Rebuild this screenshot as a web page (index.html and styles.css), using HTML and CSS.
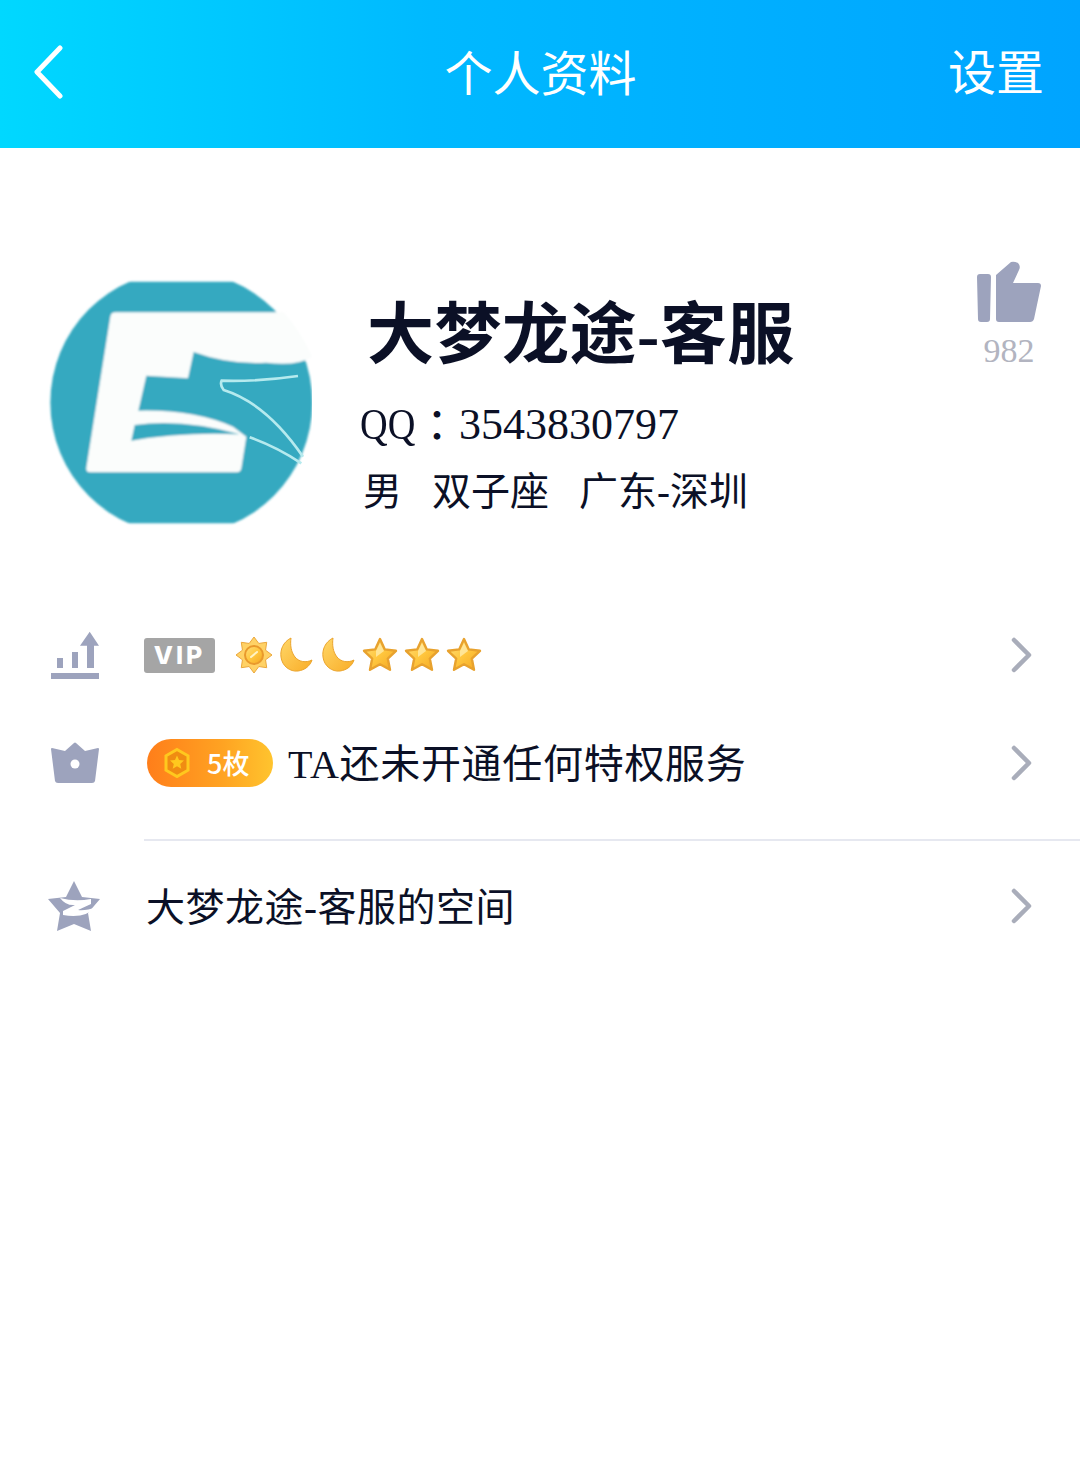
FILE: index.html
```html
<!DOCTYPE html>
<html lang="zh-CN">
<head>
<meta charset="utf-8">
<title>个人资料</title>
<link rel="stylesheet" href="styles.css">
</head>
<body>
<svg class="defs" width="0" height="0" aria-hidden="true">
  <defs>
    <linearGradient id="gold" x1="0" y1="0" x2="1" y2="1">
      <stop offset="0" stop-color="#ffdf7e"/>
      <stop offset=".5" stop-color="#ffc73f"/>
      <stop offset="1" stop-color="#f4a620"/>
    </linearGradient>
    <linearGradient id="moongold" x1="0" y1="0" x2="1" y2="1">
      <stop offset="0" stop-color="#ffd768"/>
      <stop offset="1" stop-color="#f9ad28"/>
    </linearGradient>
    <filter id="soft"><feGaussianBlur stdDeviation="2.500"/></filter>
    <clipPath id="disc"><rect x="0" y="95" width="900" height="725"/></clipPath>
    <symbol id="star" viewBox="0 0 38 38">
      <path d="M19 3l4.800 10.400 11.200 1.400-8.200 7.800 2.200 11.200L19 28.300 9 33.800l2.200-11.200L3 14.800l11.200-1.400z" fill="url(#gold)" stroke="#e8a22e" stroke-width="2.400" stroke-linejoin="round"/>
      <path d="M15 15l4-8 4 8-8 6z" fill="#ffeeb0" opacity=".75"/>
    </symbol>
    <symbol id="moon" viewBox="0 0 38 38">
      <path transform="translate(2 0)" d="M12 2C4 6 1 14 2 21c1 9 9 15 17 14 7-1 12-5 14-11-6 3-13 2-17-3C12 16 11 9 12 2z" fill="url(#moongold)" stroke="#eba42c" stroke-width="1" stroke-linejoin="round"/>
    </symbol>
    <symbol id="sun" viewBox="0 0 38 38">
      <path d="M19 1L23.800 7.450 31.700 6.300 30.550 14.200 37 19 30.550 23.800 31.700 31.700 23.800 30.550 19 37 14.200 30.550 6.300 31.700 7.450 23.800 1 19 7.450 14.200 6.300 6.300 14.200 7.450z" fill="#ffd266" stroke="#eba73c" stroke-width="1" stroke-linejoin="round"/>
      <circle cx="19" cy="19" r="9" fill="url(#gold)" stroke="#e9992c" stroke-width="2"/>
      <path d="M16 21l6-5" stroke="#fff3c4" stroke-width="2" stroke-linecap="round"/>
    </symbol>
    <symbol id="chev" viewBox="0 0 22 36">
      <path d="M3 3l15 15L3 33" fill="none" stroke="#a9adba" stroke-width="4.500" stroke-linecap="round" stroke-linejoin="round"/>
    </symbol>
  </defs>
</svg>

<header class="topbar">
  <svg class="back" viewBox="0 0 30 54"><path d="M27 3L4 27l23 24" fill="none" stroke="#fff" stroke-width="5" stroke-linecap="round" stroke-linejoin="round"/></svg>
  <h1 class="title">个人资料</h1>
  <span class="settings">设置</span>
</header>

<section class="profile">
  <svg class="avatar" viewBox="45 84 792 750">
    <g filter="url(#soft)">
      <ellipse cx="445" cy="458" rx="393" ry="395" fill="#36a9c0" clip-path="url(#disc)"/>
      <path d="M247 187H752Q800 240 838 320Q790 350 700 338Q590 345 482 306L465 385L340 377L316 482Q480 478 600 530L640 560L625 655q-2 12-14 12H172q-14 0-12-14L232 200q2-13 15-13z" fill="#fbfdfc"/>
      <path d="M305 525Q450 505 620 553Q450 545 295 572z" fill="#36a9c0"/>
    </g>
    <path d="M795 378Q680 395 566 392Q560 405 572 420Q700 460 810 620" fill="none" stroke="#b5eaee" stroke-width="8"/>
    <path d="M650 562Q730 590 805 640" fill="none" stroke="#b5eaee" stroke-width="8"/>
  </svg>
  <div class="info">
    <div class="name">大梦龙途-客服</div>
    <div class="qq"><span class="qq-label">QQ</span><span class="qq-colon">：</span>3543830797</div>
    <div class="meta"><span>男</span><span>双子座</span><span>广东-深圳</span></div>
  </div>
  <div class="likes">
    <svg class="thumb" viewBox="0 0 64 62">
      <path d="M0 16a3 3 0 0 1 3-3h8a3 3 0 0 1 3 3l-1 42a3 3 0 0 1-3 3H4a3 3 0 0 1-3-3z" fill="#9da3bd"/>
      <path d="M19 14L34 1q3-1 7 1 3 3 1 7l-6 13H61q3 0 3 3L57 58q-1 3-4 3H22q-3 0-3-3z" fill="#9da3bd"/>
    </svg>
    <span class="like-count">982</span>
  </div>
</section>

<section class="rows">
  <div class="row">
    <svg class="row-icon chart-icon" viewBox="0 0 48 50">
      <path d="M0 43h48v6H0zM6 28h6v10H6zM21 22h6v16h-6zM36 15.700h7V38h-7zM38.700 1.700L48 15.700H29z" fill="#9da3bd"/>
    </svg>
    <span class="vip">VIP</span>
    <div class="levels">
      <svg class="lv"><use href="#sun"/></svg>
      <svg class="lv"><use href="#moon"/></svg>
      <svg class="lv"><use href="#moon"/></svg>
      <svg class="lv"><use href="#star"/></svg>
      <svg class="lv"><use href="#star"/></svg>
      <svg class="lv"><use href="#star"/></svg>
    </div>
    <svg class="chev"><use href="#chev"/></svg>
  </div>
  <div class="row">
    <svg class="row-icon" viewBox="0 0 48 48">
      <path d="M0 10q0-1 1-1l13 3 9-8q1-1 2 0l9 8 13-3q1 0 1 1l-4 32q-.5 2-3 2H7q-2.500 0-3-2z" fill="#9da3bd"/>
      <circle cx="24" cy="25" r="4.500" fill="#fff"/>
    </svg>
    <span class="pill">
      <svg class="hex" viewBox="0 0 30 34">
        <path d="M15 3.500l11 6.300v14.400l-11 6.300-11-6.300V9.800z" fill="#f08c12" stroke="#ffc81e" stroke-width="3"/>
        <path d="M15 9.500l2 4.600 5 .5-3.800 3.300 1.100 4.900-4.300-2.600-4.300 2.600 1.100-4.900L8 14.600l5-.5z" fill="#ffc81e"/>
      </svg>
      <span class="pill-text">5枚</span>
    </span>
    <span class="row-text">TA还未开通任何特权服务</span>
    <svg class="chev"><use href="#chev"/></svg>
  </div>
  <div class="divider"></div>
  <div class="row">
    <svg class="row-icon star-icon" viewBox="0 0 52 50">
      <path d="M26 0l8 16 18 2-12 14 3 18-17-7-17 7 3-18L0 18l18-2z" fill="#9da3bd"/>
      <path d="M12 17Q27 21 43 18L43 23L30 29Q38 30 48 26Q37 38 15 34L15 30L27 24Q18 25 12 17z" fill="#fff"/>
    </svg>
    <span class="row-text space-text">大梦龙途-客服的空间</span>
    <svg class="chev"><use href="#chev"/></svg>
  </div>
</section>
</body>
</html>
```

FILE: styles.css
```css
* { box-sizing: border-box; }

html, body {
  margin: 0;
  padding: 0;
  background: #fff;
}

body {
  width: 1080px;
  min-height: 1478px;
  font-family: "Liberation Serif", "Noto Sans CJK SC", serif;
  color: #0b1026;
}

.defs { position: absolute; }

.topbar {
  height: 148px;
  display: grid;
  grid-template-columns: 1fr auto 1fr;
  align-items: center;
  padding: 0 36px 4px 33px;
  background: linear-gradient(90deg, #00d8ff 0%, #00b9ff 40%, #00a4ff 100%);
  color: #fff;
}

.back { width: 30px; height: 54px; }

.title {
  margin: 0 0 0 4px;
  padding-top: 6px;
  font-size: 48px;
  font-weight: 400;
  line-height: 60px;
}

.settings {
  justify-self: end;
  padding-top: 4px;
  font-size: 48px;
  line-height: 60px;
}

.profile {
  display: flex;
  align-items: flex-start;
  padding: 113px 39px 0 48px;
}

.avatar {
  width: 264px;
  height: 250px;
  margin-top: 17px;
  flex: none;
}

.info {
  margin-left: 48px;
  padding-top: 34px;
  flex: 1;
}

.name {
  margin-left: 7px;
  font-size: 67px;
  font-weight: 700;
  letter-spacing: .5px;
  line-height: 80px;
  white-space: nowrap;
}

.qq {
  height: 56px;
  margin-top: 22px;
  font-size: 44px;
  line-height: 56px;
  white-space: nowrap;
}

.qq-label {
  display: inline-block;
  width: 55px;
  transform: scaleX(.87);
  transform-origin: left center;
}

.qq-colon {
  font-family: "Noto Sans CJK TC", serif;
  line-height: 1;
  vertical-align: -3px;
}

.meta {
  display: flex;
  gap: 30px;
  margin-top: 14px;
  margin-left: 3px;
  font-size: 39px;
  line-height: 50px;
  white-space: nowrap;
}

.likes {
  display: flex;
  flex-direction: column;
  align-items: center;
  width: 64px;
  flex: none;
}

.thumb { width: 64px; height: 62px; }

.like-count {
  margin-top: 8px;
  font-size: 34px;
  line-height: 40px;
  color: #b2b4c0;
}

.rows { margin-top: 73px; }

.row {
  display: flex;
  align-items: center;
  height: 108px;
  padding: 0 47px 0 51px;
}

.row-icon {
  width: 48px;
  height: 48px;
  flex: none;
  margin-right: 45px;
}

.chart-icon { height: 50px; }

.star-icon {
  width: 52px;
  height: 50px;
  margin-left: -3px;
  margin-right: 46px;
}

.vip {
  display: inline-flex;
  align-items: center;
  justify-content: center;
  width: 71px;
  height: 35px;
  border-radius: 3px;
  background: #a5a5a5;
  color: #fff;
  font-family: "Inter", "Liberation Sans", sans-serif;
  font-size: 25px;
  font-weight: 800;
  letter-spacing: 3px;
}

.levels {
  display: flex;
  gap: 4px;
  margin-left: 20px;
}

.lv { width: 38px; height: 38px; display: block; }

.pill {
  display: inline-flex;
  align-items: center;
  width: 126px;
  height: 48px;
  margin-left: 3px;
  padding-left: 15px;
  border-radius: 24px;
  background: linear-gradient(90deg, #ff7e1a 0%, #ffa322 60%, #ffc42e 100%);
}

.hex { width: 30px; height: 34px; flex: none; }

.pill-text {
  margin-left: 15px;
  color: #fff;
  font-family: "Noto Sans CJK SC", sans-serif;
  font-size: 27px;
  font-weight: 500;
  line-height: 48px;
  white-space: nowrap;
}

.row-text {
  margin-left: 15px;
  padding-top: 4px;
  font-size: 40px;
  letter-spacing: .7px;
  line-height: 56px;
  white-space: nowrap;
}

.space-text {
  margin-left: 0;
  font-size: 39px;
  letter-spacing: .5px;
}

.chev {
  width: 22px;
  height: 36px;
  margin-left: auto;
  flex: none;
}

.divider {
  height: 2px;
  margin: 22px 0 11px 144px;
  background: #e6e8f0;
}
```
